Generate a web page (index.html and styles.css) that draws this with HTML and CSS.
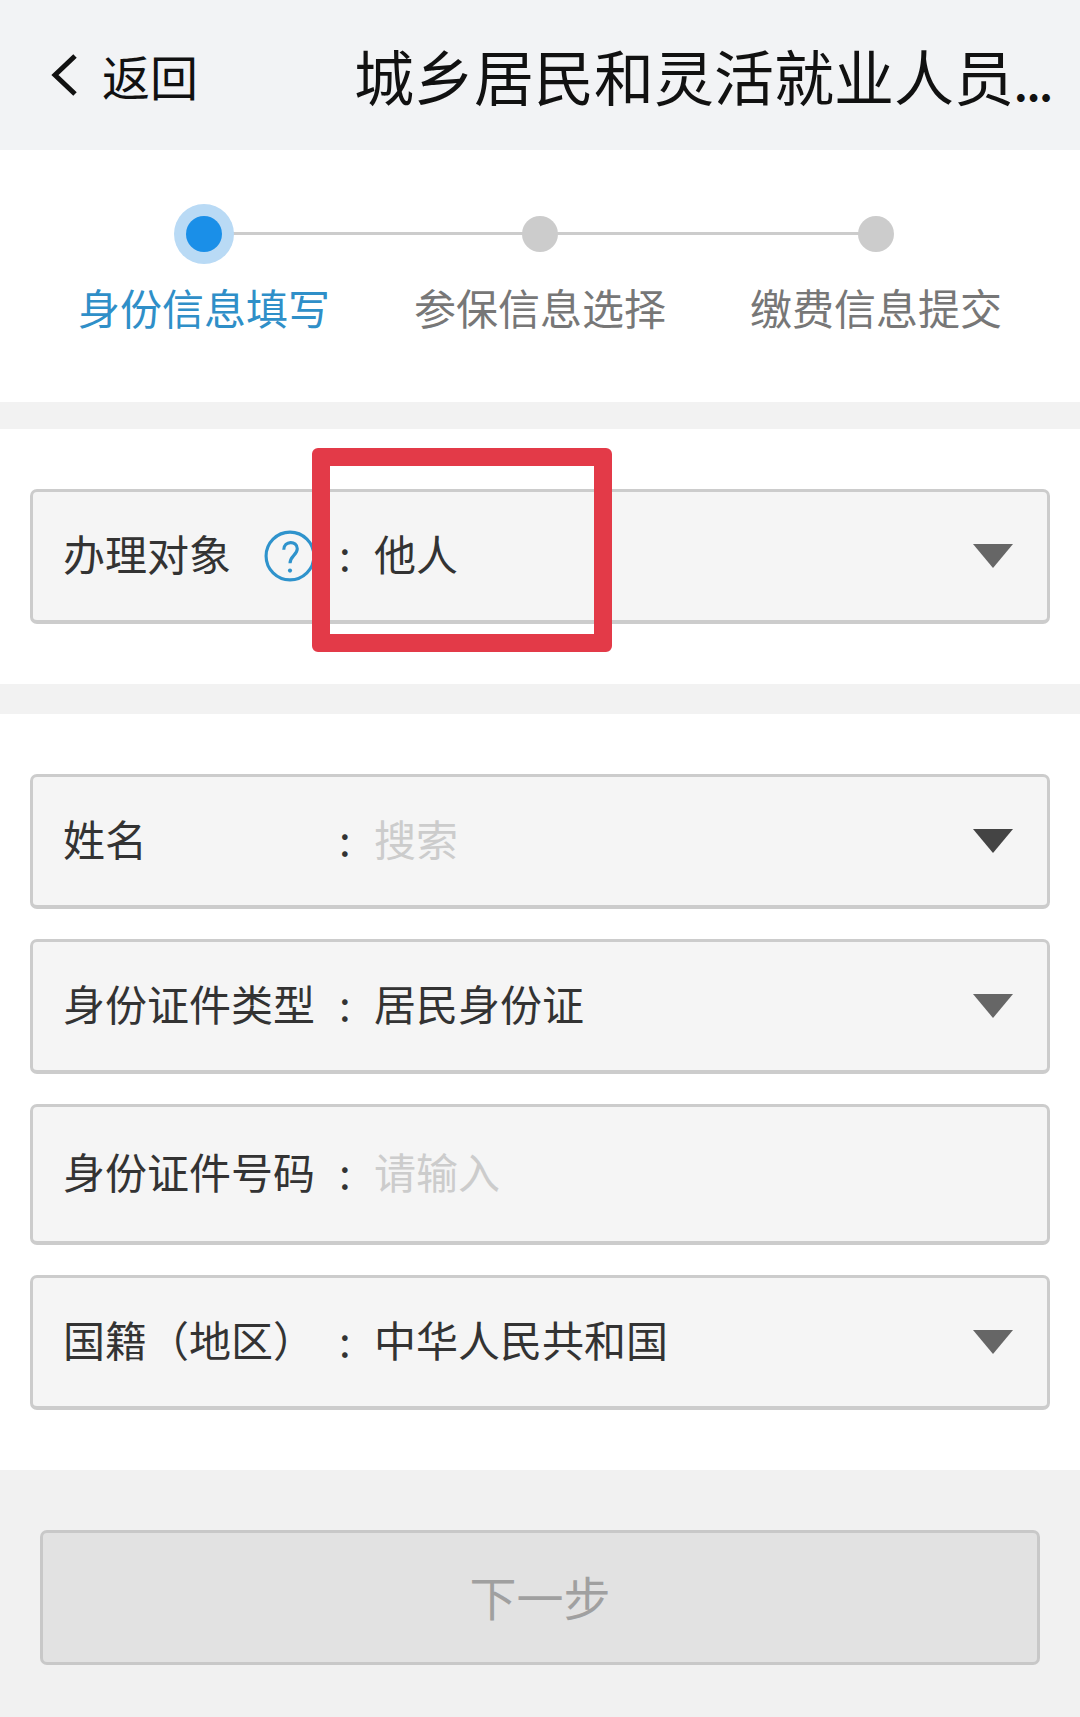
FILE: index.html
```html
<!DOCTYPE html>
<html lang="zh-CN">

<head>
    <meta charset="UTF-8">
    <meta name="viewport" content="width=device-width, initial-scale=1.0">
    <title>城乡居民和灵活就业人员</title>
    <link rel="stylesheet" href="styles.css">
</head>

<body>
    <div class="header">
        <svg class="back-icon" viewBox="0 0 28 44"><path d="M25 3 L5 22 L25 41"></path></svg>
        <span class="back-text">返回</span>
        <span class="title">城乡居民和灵活就业人员<span class="dots">...</span></span>
    </div>

    <div class="steps">
        <div class="step active">
            <div class="dot"></div>
            <p>身份信息填写</p>
        </div>
        <div class="step">
            <div class="dot"></div>
            <p>参保信息选择</p>
        </div>
        <div class="step">
            <div class="dot"></div>
            <p>缴费信息提交</p>
        </div>
    </div>

    <div class="target-section">
        <div class="field">
            <div class="label">办理对象
                <svg class="help-icon" viewBox="0 0 50 50">
                    <circle cx="25" cy="25" r="23"></circle>
                    <path d="M19 19 C19 10 32 10 32 18 C32 24 25 25 25 32"></path>
                    <circle class="help-dot" cx="25" cy="39" r="2"></circle>
                </svg>
            </div>
            <span class="colon">:</span>
            <span class="value">他人</span>
            <span class="arrow"></span>
        </div>
        <div class="highlight"></div>
    </div>

    <div class="form-section">
        <div class="field">
            <div class="label">姓名</div>
            <span class="colon">:</span>
            <span class="value placeholder">搜索</span>
            <span class="arrow dark"></span>
        </div>
        <div class="field">
            <div class="label">身份证件类型</div>
            <span class="colon">:</span>
            <span class="value">居民身份证</span>
            <span class="arrow"></span>
        </div>
        <div class="field tall">
            <div class="label">身份证件号码</div>
            <span class="colon">:</span>
            <span class="value placeholder">请输入</span>
        </div>
        <div class="field">
            <div class="label">国籍（地区）</div>
            <span class="colon">:</span>
            <span class="value">中华人民共和国</span>
            <span class="arrow"></span>
        </div>
    </div>

    <div class="footer">
        <button type="button" disabled>下一步</button>
    </div>
</body>

</html>
```

FILE: styles.css
```css
body {
    margin: 0;
    font-family: "Noto Sans CJK SC", "Liberation Sans", sans-serif;
    font-weight: 400;
    background-color: #f2f2f2;
    color: #333;
}

.header {
    height: 150px;
    box-sizing: border-box;
    padding-left: 50px;
    display: flex;
    align-items: center;
    background-color: #f2f3f5;
    color: #111;
}

.back-icon {
    width: 28px;
    height: 44px;
    margin-right: 24px;
}

.back-icon path {
    fill: none;
    stroke: #111;
    stroke-width: 5;
}

.back-text {
    font-size: 48px;
    line-height: 1;
}

.title {
    margin-left: 156px;
    font-size: 60px;
    line-height: 1;
    white-space: nowrap;
}

.dots {
    font-size: 42px;
    font-weight: 700;
    letter-spacing: -1px;
}

.steps {
    height: 252px;
    box-sizing: border-box;
    padding: 55px 36px 0;
    display: flex;
    background-color: white;
    margin-bottom: 27px;
}

.step {
    position: relative;
    flex: 1;
    text-align: center;
}

.step p {
    margin: 25px 0 0;
    font-size: 42px;
    line-height: 60px;
    color: #777;
}

.dot {
    width: 36px;
    height: 36px;
    margin: 11px auto;
    border-radius: 50%;
    background-color: #ccc;
}

/* connecting line between the dots */
.step + .step::before {
    content: "";
    position: absolute;
    top: 27px;
    right: 50%;
    width: 100%;
    height: 3px;
    background-color: #ccc;
}

.step .dot {
    position: relative;
    z-index: 1;
}

.step.active .dot {
    background-color: #1a8fe8;
    box-shadow: 0 0 0 12px #b9daf5;
}

.step.active p {
    color: #2f8fc8;
}

.target-section {
    position: relative;
    padding: 60px 30px 60px;
    background-color: white;
    margin-bottom: 30px;
}

.form-section {
    padding: 60px 30px 60px;
    background-color: white;
    display: flex;
    flex-direction: column;
    gap: 30px;
}

.field {
    height: 135px;
    box-sizing: border-box;
    padding: 0 34px 0 30px;
    display: flex;
    align-items: center;
    background-color: #f5f5f5;
    border: 3px solid #ccc;
    border-bottom-width: 4px;
    border-radius: 7px;
    font-size: 42px;
}

.field.tall {
    height: 141px;
}

/* text sits a little above the middle of the box */
.label,
.colon,
.value {
    margin-bottom: 8px;
}

.label {
    flex: 0 0 276px;
    display: flex;
    align-items: center;
}

.help-icon {
    width: 52px;
    height: 54px;
    margin: 8px 0 0 33px;
}

.help-icon circle,
.help-icon path {
    fill: none;
    stroke: #2f93cc;
    stroke-width: 3;
}

.help-icon .help-dot {
    fill: #2f93cc;
    stroke: none;
}

.colon {
    flex: 0 0 35px;
}

.value {
    flex: 1;
}

.placeholder {
    color: #ccc;
}

.arrow {
    width: 0;
    height: 0;
    border-left: 20px solid transparent;
    border-right: 20px solid transparent;
    border-top: 24px solid #666;
}

.arrow.dark {
    border-top-color: #444;
}

.highlight {
    position: absolute;
    left: 312px;
    top: 19px;
    width: 300px;
    height: 204px;
    box-sizing: border-box;
    border: 18px solid #e33a48;
    border-radius: 6px;
}

.footer {
    height: 247px;
    box-sizing: border-box;
    padding: 60px 40px 0;
    background-color: #f1f1f1;
}

button {
    width: 100%;
    height: 135px;
    padding: 0 0 4px;
    background-color: #e2e2e2;
    border: 3px solid #c8c8c8;
    border-radius: 7px;
    font-family: inherit;
    font-weight: 400;
    font-size: 47px;
    color: #a0a0a0;
}
```
